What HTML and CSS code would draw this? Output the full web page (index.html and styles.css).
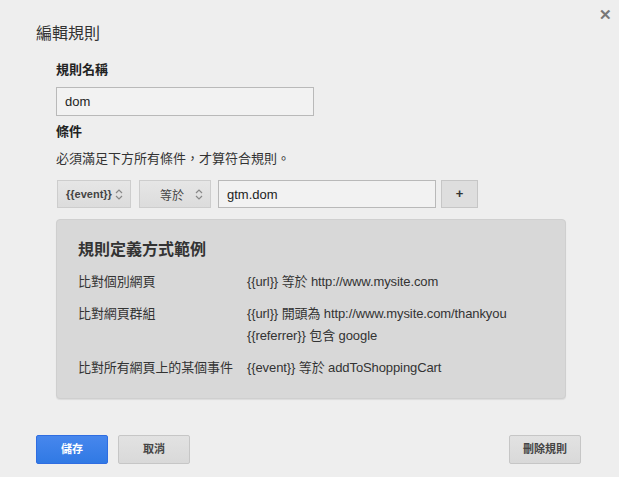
FILE: index.html
```html
<!DOCTYPE html>
<html lang="zh-Hant">

<head>
  <meta charset="UTF-8">
  <meta name="viewport" content="width=device-width, initial-scale=1.0">
  <title>編輯規則</title>
  <link rel="stylesheet" href="styles.css">
</head>

<body>
  <div class="dialog">
    <span class="close">&#x2715;</span>
    <div class="title">編輯規則</div>

    <div class="form">
      <div class="label first">規則名稱</div>
      <div class="input name">dom</div>

      <div class="label">條件</div>
      <div class="hint">必須滿足下方所有條件，才算符合規則。</div>

      <div class="condition">
        <div class="select var">
          <span>{{event}}</span>
          <svg width="8" height="11" viewBox="0 0 8 11"><path d="M1 4 L4 1 L7 4 M1 7 L4 10 L7 7" fill="none" stroke="#888" stroke-width="1.2"/></svg>
        </div>
        <div class="select op">
          <span>等於</span>
          <svg width="8" height="11" viewBox="0 0 8 11"><path d="M1 4 L4 1 L7 4 M1 7 L4 10 L7 7" fill="none" stroke="#888" stroke-width="1.2"/></svg>
        </div>
        <div class="input value">gtm.dom</div>
        <div class="plus">+</div>
      </div>

      <div class="examples">
        <div class="examples-title">規則定義方式範例</div>
        <div class="example-row">
          <div>比對個別網頁</div>
          <div>{{url}} 等於 http://www.mysite.com</div>
        </div>
        <div class="example-row">
          <div>比對網頁群組</div>
          <div>{{url}} 開頭為 http://www.mysite.com/thankyou<br>{{referrer}} 包含 google</div>
        </div>
        <div class="example-row">
          <div>比對所有網頁上的某個事件</div>
          <div>{{event}} 等於 addToShoppingCart</div>
        </div>
      </div>
    </div>

    <div class="actions">
      <div class="btn primary">儲存</div>
      <div class="btn">取消</div>
      <div class="btn right">刪除規則</div>
    </div>
  </div>
</body>

</html>
```

FILE: styles.css
```css
html,
body {
  margin: 0;
  height: 100%;
  background-color: #eeeeee;
  overflow: hidden;
}

body {
  font-family: "Liberation Sans", "Noto Sans CJK TC", sans-serif;
  font-size: 13px;
  color: #333;
}

.dialog {
  position: relative;
  padding: 23px 38px 0 36px;
}

.close {
  position: absolute;
  top: 6px;
  right: 7px;
  font-size: 15px;
  font-weight: bold;
  color: #777;
}

.title {
  font-size: 16px;
  line-height: 22px;
  color: #333;
}

.form {
  padding-left: 20px;
}

.label {
  font-weight: bold;
  line-height: 20px;
  margin-top: 4px;
  color: #222;
}

.label.first {
  margin-top: 15px;
}

.input {
  box-sizing: border-box;
  height: 29px;
  line-height: 27px;
  border: 1px solid #b9b9b9;
  background-color: #f2f2f2;
  padding: 0 8px;
  font-size: 13px;
  color: #222;
}

.input.name {
  width: 258px;
  margin: 7px 0 6px;
}

.hint {
  line-height: 20px;
  margin-top: 7px;
}

.condition {
  display: flex;
  gap: 8px;
  margin-top: 11px;
  height: 28px;
}

.select {
  box-sizing: border-box;
  display: flex;
  align-items: center;
  justify-content: space-between;
  border: 1px solid #cdcdcd;
  background: linear-gradient(#e6e6e6, #dcdcdc);
  padding: 0 7px 0 8px;
  color: #444;
}

.select.var {
  width: 74px;
  margin-left: 1px;
  font-size: 11px;
  font-weight: bold;
}

.select.op {
  width: 72px;
  font-size: 12px;
  padding-left: 20px;
}

.input.value {
  width: 218px;
  height: 28px;
  margin-left: -1px;
}

.plus {
  box-sizing: border-box;
  width: 37px;
  margin-left: -3px;
  border: 1px solid #c6c6c6;
  background-color: #dedede;
  text-align: center;
  line-height: 25px;
  font-weight: bold;
  color: #333;
}

.examples {
  box-sizing: border-box;
  width: 510px;
  margin-top: 11px;
  padding: 19px 20px 19px 21px;
  background-color: #d8d8d8;
  border: 1px solid #cfcfcf;
  border-radius: 4px;
  box-shadow: 0 1px 1px rgba(0, 0, 0, 0.08);
  color: #333;
}

.examples-title {
  font-size: 16px;
  font-weight: bold;
  line-height: 22px;
  color: #333;
  margin-bottom: 9px;
}

.example-row {
  display: grid;
  grid-template-columns: 169px auto;
  line-height: 22px;
  margin-top: 10px;
  letter-spacing: -0.1px;
}

.example-row:first-of-type {
  margin-top: 0;
}

.actions {
  display: flex;
  gap: 10px;
  margin-top: 36px;
}

.btn {
  box-sizing: border-box;
  width: 72px;
  height: 29px;
  line-height: 27px;
  text-align: center;
  font-size: 11px;
  font-weight: bold;
  color: #444;
  border: 1px solid #c6c6c6;
  border-radius: 2px;
  background: linear-gradient(#e2e2e2, #d9d9d9);
}

.btn.primary {
  color: #fff;
  border-color: #2f6de1;
  background: linear-gradient(#4787ed, #3079e4);
}

.btn.right {
  margin-left: auto;
}
```
